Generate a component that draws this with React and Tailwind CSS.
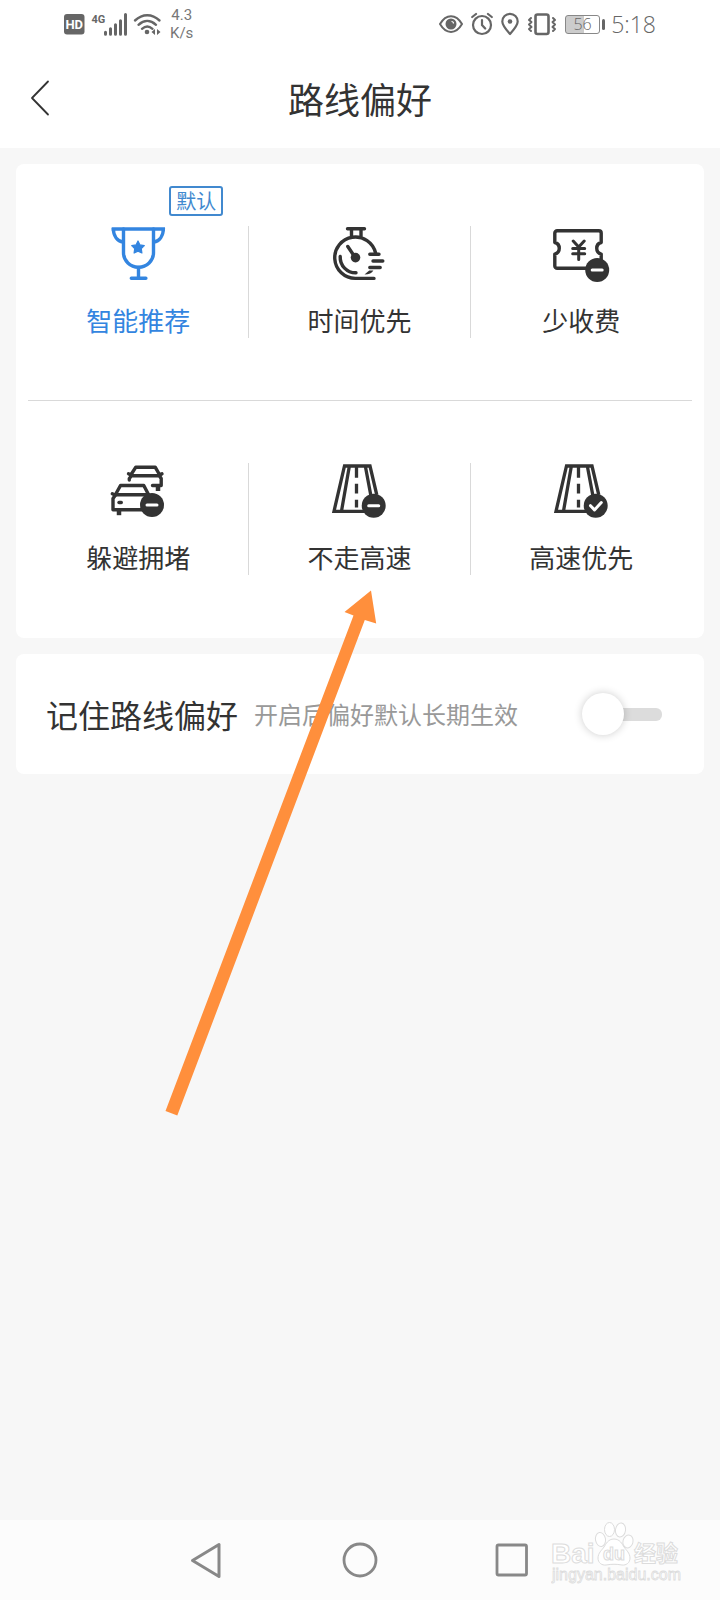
import React, { useState } from "react";

function MinusBadge({ cx, cy }) {
  return (
    <g>
      <circle cx={cx} cy={cy} r="12" fill="#333" stroke="none" />
      <path d={`M${cx - 5} ${cy}h10`} stroke="#fff" strokeWidth="3" />
    </g>
  );
}

function OptionIcon({ children }) {
  return (
    <svg
      viewBox="0 0 56 56"
      className="size-14 overflow-visible"
      fill="none"
      stroke="currentColor"
      strokeWidth="3.4"
      strokeLinecap="round"
      strokeLinejoin="round"
      aria-hidden="true"
    >
      {children}
    </svg>
  );
}

function TrophyIcon() {
  return (
    <OptionIcon>
      <path d="M1.7 3H55" strokeLinecap="butt" />
      <path d="M13.5 3v23.7a15 14.5 0 0 0 30 0V3" />
      <path d="M3.3 2c0 8 4 13 10 14.2M53.4 2c0 8-4 13-9.7 14.2" strokeLinecap="butt" />
      <path d="M28.5 41.5V52M21.3 52.3h14.6" />
      <path
        d="M28 15l2 3.9 4.3.7-3 3.1.6 4.3-3.9-1.9-3.9 1.9.6-4.3-3-3.1 4.3-.7z"
        fill="currentColor"
        strokeWidth="1.2"
      />
    </OptionIcon>
  );
}

function StopwatchIcon() {
  return (
    <OptionIcon>
      <g transform="translate(1 0)">
        <path d="M15.5 2.8h17M19.5 4v6M29 4v6" />
        <path d="M43.6 27A20.7 20.7 0 1 0 23.3 52.4H42" />
        <path d="M8.2 30.5A15.5 15.5 0 0 0 24 46.8" />
        <path d="M15.8 20.5l7.5 11.2" />
        <circle cx="23.5" cy="31.6" r="4.8" fill="currentColor" stroke="none" />
        <path d="M37.8 28.2h9.2M41 35h9.8M37.8 41.5h10.4" />
        <path d="M32.5 48.6l4.7-4.2h4.2c-1.6 2.400-4.200 4-8.900 4.200z" fill="currentColor" stroke="none" />
      </g>
    </OptionIcon>
  );
}

function TicketIcon() {
  return (
    <OptionIcon>
      <g transform="translate(0.5 0)">
        <path d="M3.7 4.7H45.3a2.4 2.4 0 0 1 2.4 2.4V16.5a6 6 0 0 0 0 11.6V42.3H3.7a2.4 2.4 0 0 1-2.4-2.4V28.1a6 6 0 0 0 0-11.6V7.1a2.4 2.4 0 0 1 2.4-2.4z" />
        <path d="M19.7 15l5.5 6 5.500-6M25.200 21v12.500M19.200 22.500h12M19.200 27.700h12" strokeWidth="3" />
        <MinusBadge cx={43.7} cy={44} />
      </g>
    </OptionIcon>
  );
}

function CarsIcon() {
  return (
    <OptionIcon>
      <path d="M20.5 12.5L25.8 4.2H45.2L50 12.5M18.5 10.8l3 1.5M52 10.8l-2.5 1.5" />
      <path d="M21 12.8H49.5M19.300 17v-1.500l2-2.500M49.500 13l1.700 2.500V22.500H42.500" />
      <path d="M48 22.500V28" strokeWidth="4.500" strokeLinecap="butt" />
      <path d="M5.500 31.500L10.500 22.500H33.800L38.500 31.500M2.300 30.800l3 1.500" />
      <path d="M5.500 31.800H38M5.500 32L3 35.500V46.800H34" />
      <path d="M9 47v5.200" strokeWidth="4.500" strokeLinecap="butt" />
      <path d="M9 39.500h2.300" />
      <MinusBadge cx={42} cy={42} />
    </OptionIcon>
  );
}

function RoadLines() {
  return (
    <path
      d="M33.5 4L39.5 36M44.8 32L38 3H12.5L2 48.3H34M17.2 4L9.6 47.5M24.5 4V14.8M24.5 20.800V30.500M24.500 36.800V44.500"
      strokeLinecap="butt"
      strokeLinejoin="miter"
      strokeWidth="3.3"
    />
  );
}

function RoadMinusIcon() {
  return (
    <OptionIcon>
      <g transform="translate(1 0)">
        <RoadLines />
        <MinusBadge cx={41.7} cy={42.7} />
      </g>
    </OptionIcon>
  );
}

function RoadCheckIcon() {
  return (
    <OptionIcon>
      <g transform="translate(1 0)">
        <RoadLines />
        <circle cx="41.7" cy="42.7" r="12" fill="#333" stroke="none" />
        <path d="M36.500 42.700l4 4.200 6.800-7.400" stroke="#fff" strokeWidth="3" />
      </g>
    </OptionIcon>
  );
}

const ROWS = [
  [
    { label: "智能推荐", Icon: TrophyIcon, badge: "默认" },
    { label: "时间优先", Icon: StopwatchIcon },
    { label: "少收费", Icon: TicketIcon },
  ],
  [
    { label: "躲避拥堵", Icon: CarsIcon },
    { label: "不走高速", Icon: RoadMinusIcon },
    { label: "高速优先", Icon: RoadCheckIcon },
  ],
];

function StatusBar() {
  return (
    <div className="flex h-12 items-center justify-between px-16 text-[#666]">
      <div className="flex items-center">
        <svg viewBox="0 0 98 26" className="h-[26px] w-[98px]" fill="none" stroke="currentColor" aria-hidden="true">
          <rect x="0" y="3" width="20.500" height="20.500" rx="3" fill="currentColor" stroke="none" />
          <text x="10.2" y="18" textAnchor="middle" fontSize="13" fontWeight="700" fill="#fff" stroke="none" fontFamily="Roboto, sans-serif">HD</text>
          <text x="27.5" y="11.5" fontSize="11" fontWeight="700" fill="currentColor" stroke="none" fontFamily="Roboto, sans-serif">4G</text>
          <path d="M41.500 23.300v-2M46.500 23.300v-5.500M51.500 23.300v-9.500M56.500 23.300v-13.500M61.500 23.300V3.500" strokeWidth="3" strokeLinecap="round" />
          <path d="M71 9.500c7.500-7 17-7 24.500 0M74.500 13.800c5.500-5 12-5 17.500 0M78 17.800c3.500-3 7-3 10.500 0" strokeWidth="2.400" strokeLinecap="round" />
          <circle cx="83" cy="21" r="2.300" fill="currentColor" stroke="none" />
          <path d="M91 18v6l-3.500-3zM93 18v6l3.500-3z" fill="currentColor" stroke="none" />
        </svg>
        <div className="ml-2 flex flex-col font-[Roboto,sans-serif] text-[15px] leading-[18px] text-[#777]">
          <span className="text-center">4.3</span>
          <span>K/s</span>
        </div>
      </div>
      <div className="flex items-center gap-2">
        <svg viewBox="0 0 24 24" className="size-6" fill="none" stroke="currentColor" strokeWidth="2" aria-hidden="true">
          <path d="M1 12C7 1.500 17 1.500 23 12 17 22.500 7 22.500 1 12z" />
          <circle cx="12" cy="12" r="5.500" fill="currentColor" stroke="none" />
          <path d="M12.500 9.500a2 2 0 0 1 2 2" stroke="#fff" strokeWidth="1.200" />
        </svg>
        <svg viewBox="0 0 22 24" className="h-6 w-[22px]" fill="none" stroke="currentColor" strokeWidth="2.2" strokeLinecap="round" aria-hidden="true">
          <circle cx="11" cy="13" r="9" />
          <path d="M11 8v5l3.200 3.500M1.200 5L5 2M20.800 5L17 2" />
        </svg>
        <svg viewBox="0 0 18 24" className="h-6 w-[18px]" fill="none" stroke="currentColor" strokeWidth="2.2" strokeLinejoin="round" aria-hidden="true">
          <path d="M9 22C5 17.500 1.300 13.500 1.300 9.500a7.700 7.700 0 0 1 15.400 0C16.700 13.500 13 17.500 9 22z" />
          <circle cx="9" cy="9.500" r="2.300" fill="currentColor" stroke="none" />
        </svg>
        <svg viewBox="0 0 30 24" className="h-6 w-[30px]" fill="none" stroke="currentColor" strokeLinecap="round" strokeLinejoin="round" aria-hidden="true">
          <rect x="8.500" y="2.500" width="13" height="19.500" rx="2" strokeWidth="2.600" />
          <path d="M4 6L2 8l2.500 2L2 12.500 4.500 15 2 17l2 2M26 6l2 2-2.500 2 2.500 2.500-2.500 2.500 2.500 2-2 2" strokeWidth="2" />
        </svg>
        <div className="flex items-center gap-1.5">
          <div className="flex items-center gap-0.5">
            <div className="flex h-[19px] w-[35px] items-center justify-center rounded-[3px] border border-[#888] bg-linear-to-r from-[#ccc] from-55% to-white to-55% font-['Open_Sans',sans-serif] text-[16px] leading-4 font-light">
              56
            </div>
            <div className="h-[11px] w-[3px] rounded-xs bg-[#666]" />
          </div>
          <span className="font-['Open_Sans',sans-serif] text-[23px] leading-6 font-light">5:18</span>
        </div>
      </div>
    </div>
  );
}

function OptionButton({ option, selected, onSelect }) {
  const { Icon, label, badge } = option;
  return (
    <button
      type="button"
      aria-pressed={selected}
      onClick={onSelect}
      className={`relative flex h-28 flex-col items-center gap-6 ${selected ? "text-[#3385e0]" : "text-[#333]"}`}
    >
      <Icon />
      <span className="text-[26px] leading-7">{label}</span>
      {badge && (
        <span className="absolute -top-10 right-[25px] rounded-[3px] border-2 border-[#4189cf] px-[5px] text-[20px] leading-[26px] text-[#4189cf]">
          {badge}
        </span>
      )}
    </button>
  );
}

function Watermark() {
  return (
    <svg
      viewBox="0 0 130 68"
      className="pointer-events-none absolute right-[39px] bottom-[11px] h-[68px] w-[130px]"
      fill="#fff"
      stroke="#dcdcdc"
      strokeWidth="1"
      aria-hidden="true"
    >
      <g fontFamily="'Liberation Sans', sans-serif" fontWeight="700">
        <text x="0" y="42" fontSize="28">Bai</text>
        <text x="83" y="40" fontSize="22" fontFamily="'Noto Sans CJK SC', sans-serif">经验</text>
        <text x="1" y="59" fontSize="16" fontWeight="400" strokeWidth="0.8">jingyan.baidu.com</text>
      </g>
      <ellipse cx="49.5" cy="18.5" rx="5" ry="7" transform="rotate(-10 49.5 18.5)" />
      <ellipse cx="58.5" cy="8.500" rx="5" ry="7" />
      <ellipse cx="69.500" cy="9" rx="5" ry="7" transform="rotate(8 69.5 9)" />
      <ellipse cx="77" cy="20.500" rx="5" ry="6.500" transform="rotate(15 77 20.5)" />
      <path d="M63 18c6 0 8 5 10 8s6 6 6 11-4 7.500-8 7c-6-1-10-1-16 0-4 .5-8-2-8-7s4-8 6-11 4-8 10-8z" />
      <text x="63" y="39" textAnchor="middle" fontSize="18" fontWeight="700" fontFamily="'Liberation Sans', sans-serif">du</text>
    </svg>
  );
}

export default function App() {
  const [selected, setSelected] = useState("智能推荐");
  const [remember, setRemember] = useState(false);

  return (
    <div className="flex min-h-screen flex-col bg-[#f7f7f7] font-['Noto_Sans_CJK_SC',sans-serif] text-[#333]">
      <header className="bg-white">
        <StatusBar />
        <div className="grid h-[100px] grid-cols-[1fr_auto_1fr] items-center px-6">
          <button type="button" aria-label="返回" className="flex h-12 w-8 items-center justify-center">
            <svg viewBox="0 0 20 36" className="h-9 w-5" fill="none" stroke="currentColor" strokeWidth="1.8" strokeLinecap="round" strokeLinejoin="round">
              <path d="M18 1.5L2 18l16 16.5" />
            </svg>
          </button>
          <h1 className="text-[36px] leading-[48px]">路线偏好</h1>
        </div>
      </header>

      <main className="relative flex flex-1 flex-col gap-4 p-4">
        <section className="divide-y divide-[#d9d9d9] rounded-lg bg-white px-3 pb-px">
          {ROWS.map((row, index) => (
            <div key={index} className="grid grid-cols-3 divide-x divide-[#d9d9d9] py-[62px]">
              {row.map((option) => (
                <OptionButton
                  key={option.label}
                  option={option}
                  selected={selected === option.label}
                  onSelect={() => setSelected(option.label)}
                />
              ))}
            </div>
          ))}
        </section>

        <section className="flex min-h-[120px] items-center rounded-lg bg-white pr-[42px] pl-[30px]">
          <label htmlFor="remember" className="flex items-center gap-4">
            <span className="text-[32px] leading-10">记住路线偏好</span>
            <span className="text-[24px] leading-8 text-[#999]">开启后偏好默认长期生效</span>
          </label>
          <input
            id="remember"
            type="checkbox"
            role="switch"
            checked={remember}
            onChange={(event) => setRemember(event.target.checked)}
            className="ml-auto flex w-20 shrink-0 appearance-none items-center before:z-10 before:size-[42px] before:shrink-0 before:rounded-full before:bg-white before:shadow-[0_0_8px_rgba(0,0,0,0.2)] after:-ml-2 after:h-[13px] after:flex-1 after:rounded-r-md after:bg-[#dcdcdc] checked:flex-row-reverse checked:after:bg-[#3385e0]"
          />
        </section>

        <svg
          viewBox="0 0 224 540"
          className="pointer-events-none absolute top-[436px] left-40 z-20 h-[540px] w-[224px]"
          fill="#ff8f3c"
          aria-hidden="true"
        >
          <path d="M211 6.500L216.200 39.500 204.800 36 17.300 531.500 5.500 527 193.500 31.500 184.500 28z" />
        </svg>
      </main>

      <footer className="relative flex h-20 items-center justify-center gap-[116px] bg-[#fcfcfc] text-[#888]">
        <button type="button" aria-label="返回上一页">
          <svg viewBox="0 0 36 36" className="size-9" fill="none" stroke="currentColor" strokeWidth="3" strokeLinejoin="round">
            <path d="M29 2.500v32L2.500 18.500z" />
          </svg>
        </button>
        <button type="button" aria-label="主屏幕">
          <svg viewBox="0 0 36 36" className="size-9" fill="none" stroke="currentColor" strokeWidth="2.8">
            <circle cx="18" cy="18" r="16" />
          </svg>
        </button>
        <button type="button" aria-label="最近任务">
          <svg viewBox="0 0 36 36" className="size-9" fill="none" stroke="currentColor" strokeWidth="2.8">
            <rect x="3" y="3" width="29.500" height="30" rx="1.5" />
          </svg>
        </button>
        <Watermark />
      </footer>
    </div>
  );
}
